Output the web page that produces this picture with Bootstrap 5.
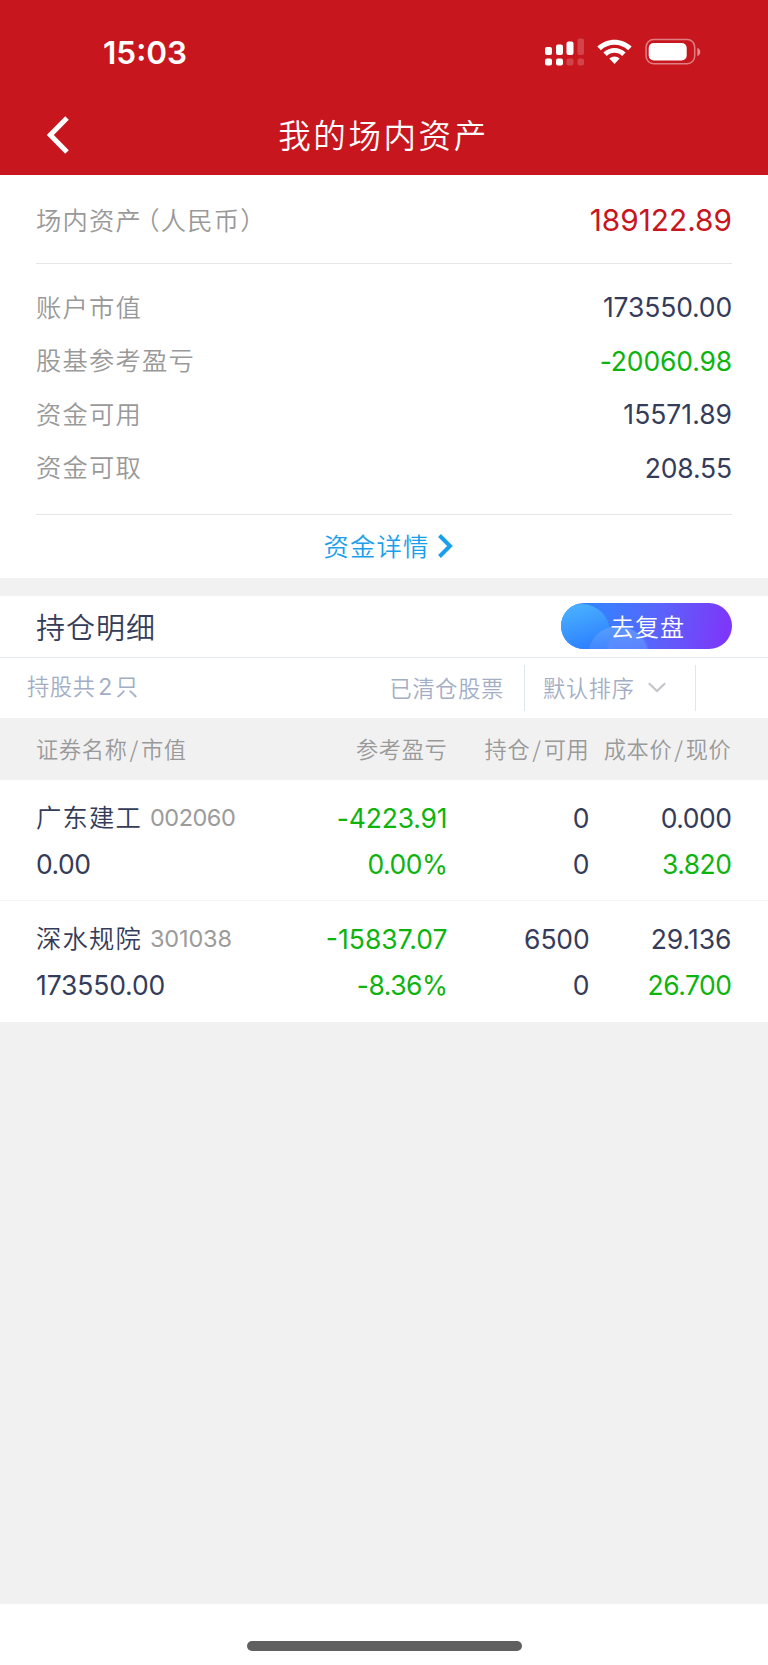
<!DOCTYPE html>
<html lang="zh-CN">
<head>
<meta charset="utf-8">
<meta name="viewport" content="width=device-width, initial-scale=1">
<title>我的场内资产</title>
<link href="https://cdn.jsdelivr.net/npm/bootstrap@5.3.0/dist/css/bootstrap.min.css" rel="stylesheet">
<style>
  body { font-family: Inter, "Noto Sans CJK SC", sans-serif; font-size: 26.5px; line-height: 1; color: #353c5a; background: #f1f1f1; }
  .zh { font-family: "Noto Sans CJK SC", sans-serif; font-size: 25.3px; letter-spacing: 1.2px; font-weight: 350; white-space: nowrap; padding-bottom: 2px; }
  .paren { font-feature-settings: "halt"; }
  .paren.open { margin-left: 5px; }
  .slash { margin: 0 2px; }
  .muted { color: #999; }
  .up { color: #c7161d; }
  .down { color: #0db40d; }
  .tight { letter-spacing: -.5px; }
  .snug { letter-spacing: -.15px; }
  .app-head { background: #c7161d; height: 174.500px; color: #fff; }
  .status-bar { height: 104px; padding: 0 67px 0 103px; }
  .clock { font-size: 31.5px; font-weight: 600; padding-top: 2px; }
  .title-bar { height: 62px; }
  .title-bar .zh { font-size: 32.5px; letter-spacing: 2.6px; }
  .side { width: 96px; padding-left: 47px; }
  .side.end { width: 97px; }
  .block { background: #fff; padding: 0 36px; }
  .total { height: 89px; border-bottom: 1px solid #e6e6e6; padding-top: 5px; }
  .total .amount { font-size: 29.8px; }
  .figures { height: 251.500px; padding: 17px 0; border-bottom: 1px solid #e6e6e6; }
  .figures > div { height: 53.6px; }
  .detail-link { height: 62.500px; color: #1aa0ea; text-decoration: none; padding-left: 8px; }
  .section-title { height: 62px; border-bottom: 1px solid #e3e8f1; }
  .section-title .zh { font-size: 29px; letter-spacing: 1px; padding-bottom: 0; }
  .review { width: 171px; height: 46.500px; border-radius: 24px; overflow: hidden; color: #fff; }
  .section-title .review-text { font-size: 24px; letter-spacing: .8px; padding-left: 2px; padding-bottom: 1px; }
  .gap-band { height: 18px; }
  .filters { height: 60.500px; color: #a3aec5; padding-left: 27px; }
  .filters .zh, .thead-row .zh { font-size: 22.2px; letter-spacing: .7px; }
  .filters .count { word-spacing: -3px; }
  .count b { font-family: Inter, sans-serif; font-weight: 400; font-size: 23px; }
  .cleared { margin-right: 19.500px; }
  .sorter { width: 169.500px; padding-left: 18px; gap: 13px; }
  .vline { width: 1.5px; height: 46px; background: #e1e7f0; }
  .vline.last { margin-right: 72px; }
  .grid4 { display: grid; grid-template-columns: 231px 180px 142px 142px; width: 695.5px; }
  .grid4 > :not(:first-child) { text-align: right; transform: translateX(.5px); }
  .thead-row { background: #f1f1f1; height: 62px; padding: 0 36px; color: #999; width: 100%; }
  .holding { height: 121px; padding: 14.500px 36px 0; background: #fff; border-bottom: 1px solid #f5f5f5; }
  .holding:last-child { border-bottom: 0; }
  .holding > div { height: 46.5px; }
  .code { font-size: 23.5px; margin-left: 8px; color: #9b9b9b; }
  .home-area { height: 61px; background: #fff; padding-top: 37px; }
  .home-bar { width: 275px; height: 10px; border-radius: 5px; background: #606060; }
</style>
</head>
<body class="min-vh-100 d-flex flex-column">
<header class="app-head">
  <div class="status-bar d-flex align-items-center justify-content-between">
    <span class="clock">15:03</span>
    <svg width="157" height="30" viewBox="0 0 157 30" fill="#fff">
      <g><rect x="1" y="10" width="7" height="8" rx="2"/><rect x="12" y="7.500" width="7" height="10.500" rx="2"/><rect x="22.500" y="4.500" width="7" height="13.500" rx="2"/><rect x="33.500" y="1.500" width="6.500" height="16.500" rx="2" opacity=".2"/>
      <rect x="1" y="21.500" width="7" height="7" rx="2"/><rect x="12" y="21.500" width="7" height="7" rx="2"/><rect x="22.500" y="21.500" width="7" height="7" rx="2" opacity=".2"/><rect x="33.500" y="21.500" width="6.500" height="7" rx="2" opacity=".2"/></g>
      <path d="M53.300 9.600C63 .3 78 .3 87.700 9.600L84.200 13.300C76.500 5.900 64.500 5.900 56.800 13.300Z"/>
      <path d="M59.400 15.600C65.800 9.500 75.200 9.500 81.600 15.600L78.200 18.900C73.800 14.800 67.200 14.800 62.800 18.900Z"/>
      <path d="M65.300 21.400C68.300 18.700 72.700 18.700 75.700 21.400L70.500 27.100Z"/>
      <rect x="102.100" y="2.600" width="48.600" height="24.100" rx="7.500" fill="none" stroke="#fff" stroke-width="1.500" opacity=".45"/>
      <rect x="104.700" y="6" width="38" height="17.500" rx="5"/>
      <path d="M153.300 11c4 1 4 7 0 8z" opacity=".5"/>
    </svg>
  </div>
  <div class="title-bar d-flex align-items-center justify-content-between">
    <div class="side"><svg class="d-block" width="22" height="38" viewBox="0 0 22 38" fill="none" stroke="#fff" stroke-width="5"><path d="M20 2 3.300 19 20 36"/></svg></div>
    <span class="zh">我的场内资产</span>
    <div class="side end"></div>
  </div>
</header>

<section class="block">
  <div class="total d-flex align-items-center justify-content-between"><span class="zh muted">场内资产<span class="paren open">（</span>人民币<span class="paren">）</span></span><span class="amount up">189122.89</span></div>
  <div class="figures">
    <div class="d-flex align-items-center justify-content-between"><span class="zh muted">账户市值</span><span class="snug">173550.00</span></div>
    <div class="d-flex align-items-center justify-content-between"><span class="zh muted">股基参考盈亏</span><span class="down snug">-20060.98</span></div>
    <div class="d-flex align-items-center justify-content-between"><span class="zh muted">资金可用</span><span>15571.89</span></div>
    <div class="d-flex align-items-center justify-content-between"><span class="zh muted">资金可取</span><span class="snug">208.55</span></div>
  </div>
  <a class="detail-link d-flex align-items-center justify-content-center" href="#"><span class="zh">资金详情</span>
    <svg class="ms-2" width="15" height="24" viewBox="0 0 15 24" fill="none" stroke="#1aa0ea" stroke-width="4"><path d="M1.500 1.500 12 12 1.500 22.500"/></svg></a>
</section>

<section>
  <div class="gap-band"></div>
  <div class="block section-title d-flex align-items-center justify-content-between">
    <span class="zh">持仓明细</span>
    <div class="review position-relative d-flex align-items-center justify-content-center">
      <svg class="position-absolute top-0 start-0" width="172" height="47" viewBox="0 0 172 47">
        <defs>
          <linearGradient id="pill" x2="1" y2=".05"><stop stop-color="#2389fb"/><stop offset=".3" stop-color="#3d7bff"/><stop offset=".6" stop-color="#5b62fb"/><stop offset="1" stop-color="#7e36f9"/></linearGradient>
          <linearGradient id="ball" x2=".3" y2="1"><stop stop-color="#4db8ff"/><stop offset="1" stop-color="#2a79ff"/></linearGradient>
          <linearGradient id="bubble" x2="0" y2="1"><stop stop-color="#67a8ff" stop-opacity=".65"/><stop offset=".7" stop-color="#5580ff" stop-opacity=".3"/></linearGradient>
        </defs>
        <rect width="172" height="47" fill="url(#pill)"/>
        <circle cx="21" cy="29" r="28" fill="url(#ball)"/>
        <circle cx="57" cy="53" r="30" fill="url(#bubble)"/>
        <circle cx="67" cy="47" r="20" fill="#77a0ff" opacity=".2"/>
      </svg>
      <span class="zh position-relative review-text">去复盘</span>
    </div>
  </div>
  <div class="filters bg-white d-flex align-items-center">
    <span class="zh count me-auto">持股共 <b>2</b> 只</span>
    <span class="zh cleared">已清仓股票</span>
    <i class="vline"></i>
    <span class="sorter d-flex align-items-center"><span class="zh">默认排序</span>
      <svg width="18" height="12" viewBox="0 0 18 12" fill="none" stroke="#c2c5ca" stroke-width="2.200"><path d="M.8 1.200 9 9 17.200 1.200"/></svg></span>
    <i class="vline last"></i>
  </div>
  <div class="thead-row grid4 align-items-center"><span class="zh">证券名称<span class="slash">/</span>市值</span><span class="zh">参考盈亏</span><span class="zh">持仓<span class="slash">/</span>可用</span><span class="zh">成本价<span class="slash">/</span>现价</span></div>
  <div class="holding">
    <div class="grid4 align-items-center"><span class="d-flex align-items-center"><span class="zh">广东建工</span><span class="code tight">002060</span></span><span class="down snug">-4223.91</span><span>0</span><span class="tight">0.000</span></div>
    <div class="grid4 align-items-center"><span class="tight">0.00</span><span class="down tight">0.00%</span><span>0</span><span class="down tight">3.820</span></div>
  </div>
  <div class="holding">
    <div class="grid4 align-items-center"><span class="d-flex align-items-center"><span class="zh">深水规院</span><span class="code snug">301038</span></span><span class="down">-15837.07</span><span class="snug">6500</span><span>29.136</span></div>
    <div class="grid4 align-items-center"><span class="snug">173550.00</span><span class="down tight">-8.36%</span><span>0</span><span class="down tight">26.700</span></div>
  </div>
</section>
<footer class="home-area mt-auto"><div class="home-bar mx-auto"></div></footer>
<script src="https://cdn.jsdelivr.net/npm/bootstrap@5.3.0/dist/js/bootstrap.bundle.min.js"></script>
</body>
</html>
